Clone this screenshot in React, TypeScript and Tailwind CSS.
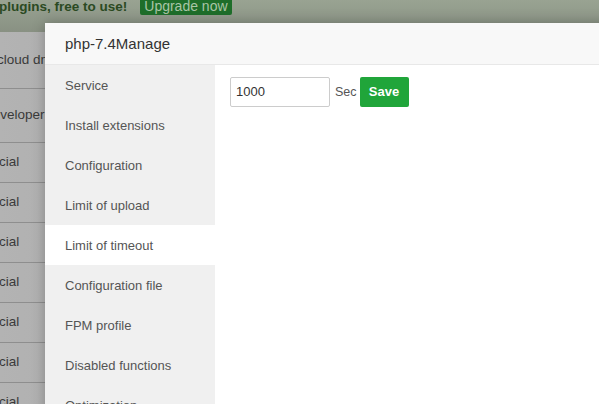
import React from "react";

const menu = [
  "Service",
  "Install extensions",
  "Configuration",
  "Limit of upload",
  "Limit of timeout",
  "Configuration file",
  "FPM profile",
  "Disabled functions",
  "Optimization",
];

export default function App() {
  return (
    <div
      className="relative w-[599px] h-[404px] overflow-hidden bg-[#a3a3a3]"
      style={{ fontFamily: '"Liberation Sans", Arial, sans-serif' }}
    >
      {/* background page (dimmed) */}
      <div className="flex flex-col w-full">
        <div className="h-[32px] shrink-0 bg-gradient-to-b from-[#99a392] to-[#899183] flex items-start gap-[13px]">
          <span className="text-[13.5px] font-bold text-[#2b4a22] leading-[16px] ml-[-1px] mt-[-1px]">
            plugins, free to use!
          </span>
          <span className="bg-[#1e6e2a] text-[#a9c5a6] text-[14px] leading-[17px] px-[4px] mt-[-2px] rounded-[2px]">
            Upgrade now
          </span>
        </div>
        <div className="shrink-0 bg-gradient-to-r from-[#b3b3b3] to-[#989898] text-[#3a3a3a] text-[13.5px]">
          <div className="h-[57px] flex items-center border-b border-[#8e8e8e]">
            <span className="ml-[-3px]">cloud dns</span>
          </div>
          <div className="h-[54px] flex items-center border-b border-[#8e8e8e]">
            <span className="ml-[-17px]">Developer</span>
          </div>
          {Array.from({ length: 7 }).map((_, i) => (
            <div
              key={i}
              className="h-[40px] shrink-0 flex items-center border-b border-[#8e8e8e]"
            >
              <span className="ml-[-1px]">cial</span>
            </div>
          ))}
        </div>
      </div>

      {/* modal */}
      <div className="absolute left-[45px] top-[23px] w-[600px] h-[420px] bg-white flex flex-col shadow-[0_0_12px_rgba(0,0,0,0.25)]">
        <div className="h-[42px] shrink-0 bg-[#f8f8f8] border-b border-[#e8e8e8] flex items-center pl-[20px] pt-[1px] text-[15px] text-[#333]">
          php-7.4Manage
        </div>
        <div className="flex flex-1">
          <div className="w-[170px] bg-[#f0f0f0] flex flex-col">
            {menu.map((m) => (
              <div
                key={m}
                className={`h-[40px] shrink-0 flex items-center pl-[20px] pt-[2px] text-[13px] text-[#555] ${
                  m === "Limit of timeout" ? "bg-white" : ""
                }`}
              >
                {m}
              </div>
            ))}
          </div>
          <div className="flex-1 pl-[15px] pt-[12px]">
            <div className="flex items-center">
              <div className="w-[100px] h-[30px] border border-[#ccc] rounded-[2px] flex items-center pl-[5px] text-[13px] text-[#333]">
                1000
              </div>
              <span className="ml-[5px] text-[12.5px] text-[#555]">Sec</span>
              <button className="ml-[3px] w-[49px] h-[30px] bg-[#20a53a] text-white text-[13px] font-bold rounded-[2px]">
                Save
              </button>
            </div>
          </div>
        </div>
      </div>
    </div>
  );
}
